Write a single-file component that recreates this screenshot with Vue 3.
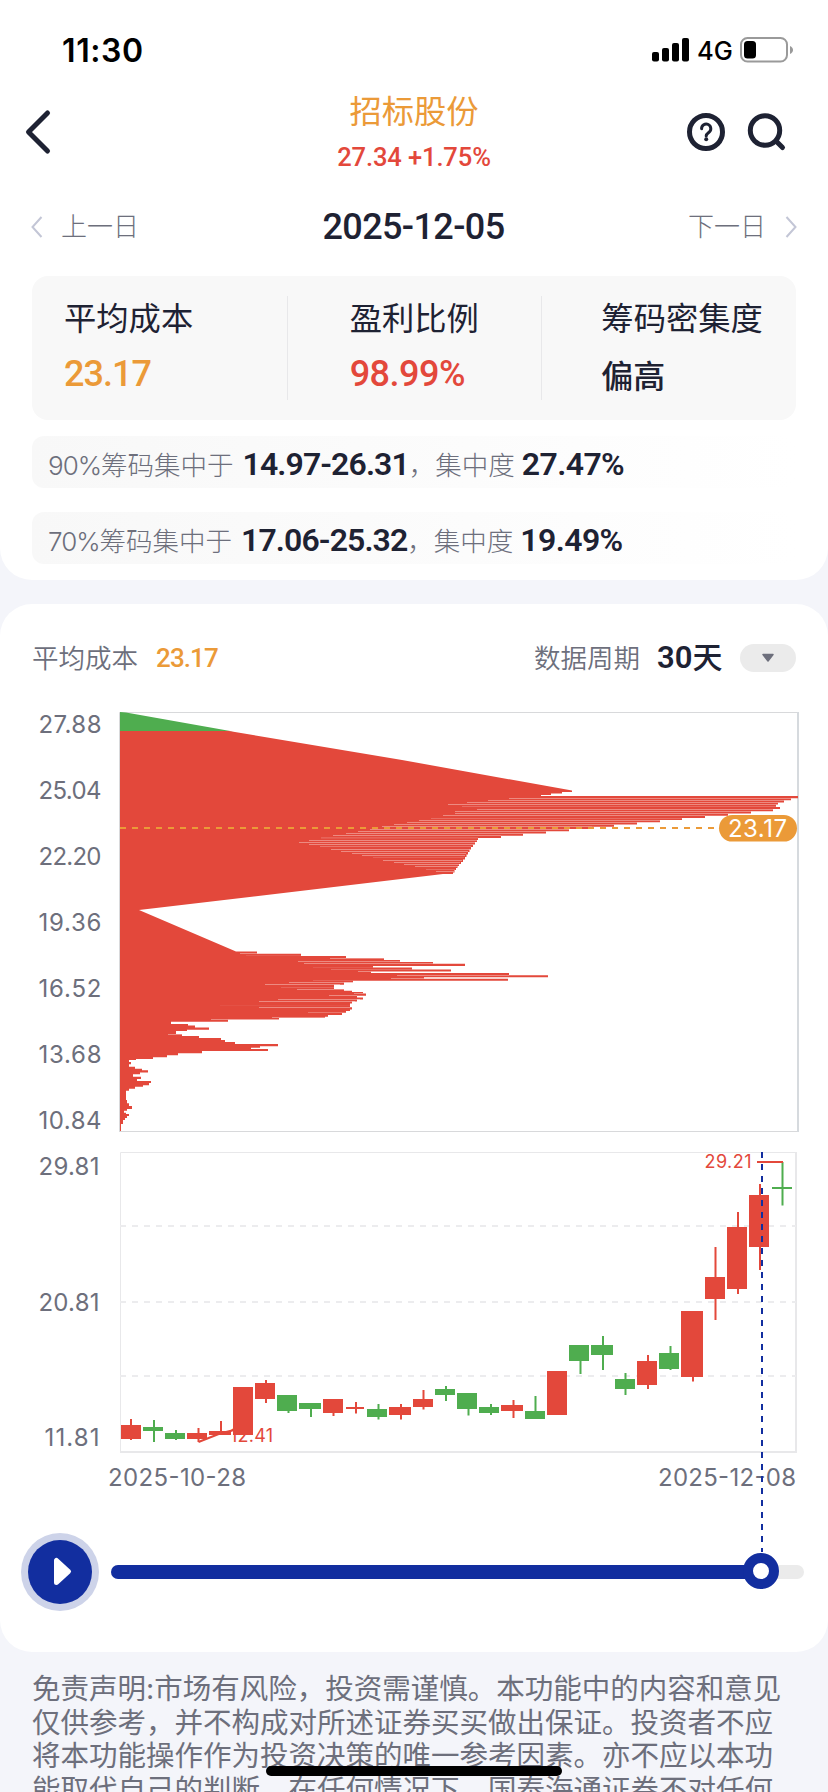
<template>
    <div class="page">
        <section class="card summary">
            <div class="status-bar">
                <span class="clock">11:30</span>
                <div class="status-right">
                    <svg class="signal" width="38" height="24" viewBox="0 0 38 24">
                        <rect x="0" y="14" width="7" height="9.5" rx="2" />
                        <rect x="10" y="10" width="7" height="13.5" rx="2" />
                        <rect x="20" y="5" width="7" height="18.5" rx="2" />
                        <rect x="30" y="0" width="7" height="23.5" rx="2" />
                    </svg>
                    <span class="network">4G</span>
                    <svg class="battery" width="54" height="26" viewBox="0 0 54 26">
                        <rect x="1" y="1" width="46" height="23.5" rx="6.5" fill="none" stroke="#9a9a9a" stroke-width="2" />
                        <rect x="4" y="4" width="12" height="17.5" rx="3.5" fill="#000" />
                        <path d="M50 9v8c4-1.500 4-6.500 0-8z" fill="#9a9a9a" />
                    </svg>
                </div>
            </div>

            <div class="nav">
                <svg class="back" width="28" height="46" viewBox="0 0 28 46">
                    <path d="M23.500 4L4.500 23L23.500 42" />
                </svg>
                <div class="stock">
                    <div class="stock-name">招标股份</div>
                    <div class="stock-price">27.34 +1.75%</div>
                </div>
                <div class="nav-icons">
                    <svg width="40" height="40" viewBox="0 0 40 40">
                        <circle cx="20" cy="20" r="16.500" />
                        <path class="thin" d="M15.600 16.800a4.600 4.600 0 1 1 7.200 3.600c-1.600 1.200-2.600 1.900-2.600 3.700" />
                        <circle class="dot" cx="20.200" cy="27.300" r="2" />
                    </svg>
                    <svg width="40" height="40" viewBox="0 0 40 40">
                        <circle cx="18" cy="18.500" r="14.700" />
                        <path d="M29.500 29.500L35.500 35.500" />
                    </svg>
                </div>
            </div>

            <div class="date-row">
                <button class="day-btn">
                    <svg width="12" height="22" viewBox="0 0 12 22"><path d="M10.500 1L1.500 11L10.500 21" /></svg>
                    <span>上一日</span>
                </button>
                <span class="date">2025-12-05</span>
                <button class="day-btn next">
                    <span>下一日</span>
                    <svg width="12" height="22" viewBox="0 0 12 22"><path d="M1.500 1L10.500 11L1.500 21" /></svg>
                </button>
            </div>

            <div class="stats">
                <div v-for="item in stats" :key="item.label" class="stat" :class="item.type">
                    <div class="stat-label">{{ item.label }}</div>
                    <div class="stat-value">{{ item.value }}</div>
                </div>
            </div>

            <div v-for="item in ranges" :key="item.percent" class="range">
                <span class="percent">{{ item.percent }}</span>
                <span>筹码集中于</span>
                <span class="range-num first">{{ item.range }}</span>
                <span>，集中度</span>
                <span class="range-num">{{ item.ratio }}</span>
            </div>
        </section>

        <section class="card chart-card">
            <div class="chart-head">
                <span class="head-label">平均成本</span>
                <span class="head-cost">23.17</span>
                <span class="head-label period-label">数据周期</span>
                <span class="period">30<b>天</b></span>
                <button class="dropdown">
                    <svg width="14" height="10" viewBox="0 0 14 10">
                        <path d="M2 1.500H12L7 8z" fill="#6d6f7c" stroke="#6d6f7c" stroke-width="1.500" stroke-linejoin="round" />
                    </svg>
                </button>
            </div>

            <!-- 筹码分布 -->
            <svg class="chart" width="828" height="440" viewBox="0 700 828 440">
                <path d="M119.500 1131V712.500H797" fill="none" stroke="#d8d9db" />
                <path d="M119 1131.500H799" stroke="#d8d9db" />
                <path d="M798 712V1132" stroke="#d6dade" stroke-width="2" />
                <path d="M120 712L126 712.500L233 731.500H120z" fill="#4fad4f" />
                <path :d="chipPath" fill="#e3483b" />
                <g shape-rendering="crispEdges" fill="#fff">
                    <rect
                        v-for="(s, i) in stripes"
                        :key="i"
                        :x="s[1]"
                        :y="s[0]"
                        :width="s[2] - s[1]"
                        height="1"
                        :opacity="s[3] || 0.36"
                    />
                </g>
                <path d="M120 828H714" stroke="#eb9a38" stroke-width="2" stroke-dasharray="6 6" />
                <rect x="719" y="815" width="78" height="26.500" rx="13.200" fill="#eb9a38" />
                <text class="badge-text" x="728" y="837" textLength="59">23.17</text>
                <text
                    v-for="(t, i) in chipLabels"
                    :key="t"
                    class="axis"
                    x="101.500"
                    :y="733 + i * 66"
                    text-anchor="end"
                    textLength="63"
                >{{ t }}</text>
            </svg>

            <!-- K线 -->
            <svg class="chart" width="828" height="412" viewBox="0 1140 828 412">
                <path d="M120.500 1452V1152.500H796" fill="none" stroke="#e8e8ea" />
                <path d="M120 1452H797M796 1152V1452" fill="none" stroke="#e8e8ea" stroke-width="2" />
                <path d="M120 1226H796M120 1302H796M120 1376H796" stroke="#ececee" stroke-width="2" stroke-dasharray="6 6" />
                <g v-for="(c, i) in candles" :key="i" :fill="c[0] ? '#e3483b' : '#4fad4f'">
                    <rect :x="c[5] - 1" :y="c[6]" width="2" :height="c[7] - c[6]" />
                    <rect :x="c[1]" :y="c[2]" :width="c[3] - c[1]" :height="c[4] - c[2]" />
                </g>
                <path d="M198.500 1442L220 1433.500L234 1430M757 1162H783" fill="none" stroke="#e3483b" stroke-width="2" />
                <text class="mark" x="230" y="1442" textLength="43">12.41</text>
                <text class="mark" x="704.500" y="1168" textLength="47">29.21</text>
                <text class="axis" x="99.500" y="1175" text-anchor="end" textLength="61">29.81</text>
                <text class="axis" x="99.500" y="1311" text-anchor="end" textLength="61">20.81</text>
                <text class="axis" x="99.500" y="1446" text-anchor="end" textLength="55">11.81</text>
                <text class="axis" x="108" y="1486" textLength="138">2025-10-28</text>
                <text class="axis" x="658" y="1486" textLength="138">2025-12-08</text>
                <path d="M762 1152V1552" stroke="#122e9f" stroke-width="2" stroke-dasharray="6 6" />
            </svg>

            <div class="player">
                <button class="play">
                    <svg width="78" height="78" viewBox="0 0 78 78">
                        <circle cx="39" cy="39" r="39" fill="#cdd3e9" />
                        <circle cx="39" cy="39" r="32" fill="#122e9f" />
                        <path d="M35.500 27.500V49.500L47.500 38.500z" fill="#fff" stroke="#fff" stroke-width="5" stroke-linejoin="round" />
                    </svg>
                </button>
                <div class="track">
                    <div class="track-fill" :style="{ width: progress + '%' }"></div>
                    <div class="knob" :style="{ left: progress + '%' }"></div>
                </div>
            </div>
        </section>

        <div class="disclaimer">
            <div v-for="line in disclaimer" :key="line">{{ line }}</div>
        </div>
        <div class="home-indicator"></div>
    </div>
</template>

<script setup>
import { computed, ref } from 'vue'

const progress = ref(93.8)

const stats = [
    { label: '平均成本', value: '23.17', type: 'cost' },
    { label: '盈利比例', value: '98.99%', type: 'profit' },
    { label: '筹码密集度', value: '偏高', type: 'density' }
]

const ranges = [
    { percent: '90%', range: '14.97-26.31', ratio: '27.47%' },
    { percent: '70%', range: '17.06-25.32', ratio: '19.49%' }
]

const chipLabels = ['27.88', '25.04', '22.20', '19.36', '16.52', '13.68', '10.84']

// 每一档: [起始y, 右端x]
const steps = [
    [796, 798], [798.2, 791], [800.2, 784], [802.4, 778], [804.6, 776], [807, 780], [809, 773],
    [811.2, 751], [813.5, 728], [815.7, 705], [818, 682], [820, 660], [822.3, 637], [824.5, 614],
    [826.8, 592], [829, 569], [831.3, 546], [833.5, 523], [835.8, 501], [838, 478], [840, 477],
    [842, 475], [844.5, 473], [847, 471], [849.5, 469.5], [852, 468], [854.5, 466.5], [857, 465],
    [859.5, 463], [862, 461], [864, 459], [866, 457.5], [868, 456], [870, 454.5], [872.5, 453], [874, 443]
]

const lowSteps = [
    [951.5, 257], [953.7, 301], [956, 346], [958, 384], [960, 400], [962, 433], [963.8, 465],
    [966, 373], [967.5, 412], [969.6, 451], [971.8, 371], [973, 509], [975.2, 548], [977.2, 424],
    [978.8, 508], [980.8, 353], [982.5, 344], [984.7, 334], [989, 344], [990.8, 352], [992, 363],
    [993.5, 366], [995.7, 357], [997.5, 363], [999.5, 357], [1001.5, 352], [1003.5, 350],
    [1007.3, 352], [1009.5, 350], [1011, 346], [1013, 342], [1015, 328], [1016.7, 325],
    [1018, 279], [1019.8, 228], [1021.8, 171], [1024, 188], [1025.5, 195], [1027.5, 209],
    [1029.7, 187], [1031, 176], [1034, 182], [1036, 199], [1038, 221], [1040, 225], [1042, 235],
    [1044, 278], [1046.3, 260], [1047.7, 251], [1049, 268], [1051, 202], [1053.3, 178],
    [1055.3, 167], [1057.3, 153], [1059, 136], [1060, 129], [1062, 131], [1064.3, 129],
    [1066.7, 135], [1068.7, 142], [1070.3, 148], [1072.5, 140], [1074.3, 133], [1076.7, 141],
    [1079, 137], [1081, 151], [1083, 149], [1085.3, 143], [1086.7, 135], [1088.7, 129],
    [1090.7, 126], [1100, 127], [1103.3, 129], [1106, 132], [1109, 127], [1110.7, 124],
    [1112.7, 126], [1114, 129], [1116, 127], [1118, 125], [1120, 123], [1124, 121], [1131, 120]
]

function toSteps(list) {
    return list.map(([y, x]) => `V${y}H${x}`).join('')
}

const chipPath = computed(() =>
    `M120 731H229L402 760L572 790.500V792H562V793.500H551V795H541${toSteps(steps)}` +
    `L139 910L236 951.500${toSteps(lowSteps)}V731z`
)

// 档位之间的浅色缝隙: [y, x1, x2, 透明度]
const stripes = [
    [798, 509, 791], [800, 488, 784], [802, 467, 778], [804, 448, 776], [806, 462, 776, 0.2],
    [809, 477, 773], [811, 455, 751], [813, 455, 728], [815, 443, 705], [818, 431, 682, 0.2],
    [820, 419, 660], [822, 407, 637], [824, 394, 614], [826, 382, 592], [829, 370, 569],
    [831, 358, 546], [833, 346, 523], [835, 333, 501], [837, 321, 478, 0.15], [838, 321, 478, 0.1],
    [840, 309, 477], [842, 299, 475], [844, 309, 473], [846, 320, 471, 0.25], [849, 331, 470],
    [851, 341, 468], [853, 352, 466], [855, 362, 465], [857, 373, 464, 0.15], [860, 383, 462],
    [862, 394, 460], [864, 404, 459], [866, 415, 457], [869, 426, 455, 0.2], [871, 436, 454],
    [953, 240, 257], [955, 246, 301, 0.1], [958, 330, 384], [961, 298, 400], [963, 304, 433],
    [967, 313, 373, 0.1], [969, 331, 412, 0.2], [971, 358, 451], [975, 397, 509], [978, 391, 424],
    [980, 313, 353, 0.15], [982, 289, 353], [984, 265, 340], [987, 281, 334, 0.15],
    [989, 297, 344], [993, 354, 363], [995, 329, 357], [999, 278, 360], [1001, 259, 355],
    [1005, 220, 350, 0.05], [1007, 259, 350], [1012, 308, 346, 0.25], [1017, 272, 325],
    [1019, 211, 279], [1034, 168, 182]
]

// [涨跌, 左, 上, 右, 下, 影线x, 最高y, 最低y]
const candles = [
    [1, 121, 1425, 141, 1439, 131, 1419, 1440],
    [0, 143, 1427, 163, 1431, 154, 1420, 1442],
    [0, 165, 1433, 185, 1439, 176, 1430, 1440],
    [1, 187, 1433, 207, 1439, 198.5, 1428, 1442],
    [1, 209, 1431, 231, 1435, 221, 1421, 1435],
    [1, 233, 1387, 253, 1435, 243, 1387, 1435],
    [1, 255, 1383, 275, 1399, 266, 1380, 1403],
    [0, 277, 1395, 297, 1411, 288.5, 1395, 1413],
    [0, 299, 1403, 321, 1409, 311, 1403, 1417],
    [1, 323, 1399, 343, 1413, 333.5, 1399, 1416],
    [1, 346, 1407, 364, 1409, 356, 1402, 1413.5],
    [0, 367, 1409, 387, 1417, 378.5, 1404, 1419.5],
    [1, 389, 1407, 411, 1415, 401, 1404, 1419.5],
    [1, 413, 1399, 433, 1407, 423.5, 1390, 1409.5],
    [0, 435, 1389, 455, 1395, 446, 1386, 1401],
    [0, 457, 1393, 477, 1409, 468.5, 1393, 1415.5],
    [0, 479, 1407, 499, 1413, 491, 1404, 1415],
    [1, 501, 1405, 523, 1411, 513.5, 1400, 1418],
    [0, 525, 1411, 545, 1419, 535.5, 1396, 1419],
    [1, 547, 1371, 567, 1415, 557, 1371, 1415],
    [0, 569, 1345, 589, 1361, 580.5, 1345, 1374],
    [0, 591, 1345, 613, 1355, 603, 1336, 1370],
    [0, 615, 1379, 635, 1389, 625.5, 1373, 1395],
    [1, 637, 1361, 657, 1385, 648, 1355, 1389],
    [0, 659, 1353, 679, 1369, 670.5, 1346, 1370],
    [1, 681, 1311, 703, 1377, 693, 1311, 1381.5],
    [1, 705, 1277, 725, 1299, 715.5, 1247, 1320],
    [1, 727, 1227, 747, 1289, 738, 1212, 1294],
    [1, 749, 1195, 769, 1247, 760, 1184, 1270],
    [0, 772, 1187, 792, 1189, 782.5, 1162, 1205.5]
]

const disclaimer = [
    '免责声明:市场有风险，投资需谨慎。本功能中的内容和意见',
    '仅供参考，并不构成对所述证券买买做出保证。投资者不应',
    '将本功能操作作为投资决策的唯一参考因素。亦不应以本功',
    '能取代自己的判断，在任何情况下，国泰海通证券不对任何'
]
</script>

<style>
body {
    margin: 0;
    background: #f4f5fa;
}
</style>

<style scoped>
.page {
    position: relative;
    width: 828px;
    height: 1792px;
    overflow: hidden;
    background: #f4f5fa;
    color: #1e2233;
    font-family: Inter, "Noto Sans CJK SC", sans-serif;
}

button {
    padding: 0;
    border: none;
    background: none;
    font-family: inherit;
}

svg {
    display: block;
    flex: none;
}

.card {
    background: #fff;
    border-radius: 32px;
}

.summary {
    height: 580px;
    border-radius: 0 0 32px 32px;
}

.status-bar {
    display: flex;
    justify-content: space-between;
    align-items: center;
    box-sizing: border-box;
    height: 92px;
    padding: 8px 34px 0 62px;
    color: #000;
}

.clock {
    font-size: 32px;
    font-weight: 600;
    letter-spacing: 0.6px;
}

.status-right {
    display: flex;
    align-items: center;
}

.network {
    width: 43px;
    padding-left: 7px;
    box-sizing: border-box;
    font-size: 25.5px;
    font-weight: 450;
    white-space: nowrap;
}

.battery {
    margin-left: 7px;
}

.nav {
    display: grid;
    grid-template-columns: 200px 1fr 200px;
    align-items: center;
    height: 80px;
}

.back {
    margin-left: 24px;
}

.back path,
.nav-icons svg {
    fill: none;
    stroke: #1e2233;
    stroke-width: 5;
    stroke-linecap: round;
    stroke-linejoin: round;
}

.stock {
    text-align: center;
}

.stock-name {
    height: 50px;
    color: #eb9a38;
    font-size: 32.3px;
    line-height: 40px;
}

.stock-price {
    height: 30px;
    color: #e3483b;
    font-family: Roboto, sans-serif;
    font-size: 25.5px;
    font-weight: 500;
    line-height: 30px;
    letter-spacing: -0.1px;
}

.nav-icons {
    display: flex;
    gap: 21px;
    padding-left: 58px;
}

.nav-icons svg .thin {
    stroke-width: 3;
}

.nav-icons svg .dot {
    fill: #1e2233;
    stroke: none;
}

.date-row {
    display: flex;
    justify-content: space-between;
    align-items: center;
    height: 72px;
    margin-top: 19px;
    padding: 0 31px;
}

.day-btn {
    display: flex;
    align-items: center;
    gap: 18px;
    color: #6d6f7c;
    font-size: 26px;
    font-weight: 300;
    line-height: 34px;
}

.day-btn.next {
    gap: 19px;
}

.day-btn svg {
    fill: none;
    stroke: #c3c6d6;
    stroke-width: 2;
}

.date {
    font-family: Roboto, sans-serif;
    font-size: 36px;
    font-weight: 500;
    letter-spacing: -0.6px;
}

.stats {
    display: grid;
    grid-template-columns: repeat(3, 1fr);
    height: 144px;
    margin: 13px 32px 0;
    background: #f8f8f8;
    border-radius: 16px;
}

.stat {
    height: 104px;
    margin-top: 20px;
    padding-left: 32px;
    box-sizing: border-box;
}

.stat + .stat {
    padding-left: 62px;
    border-left: 1px solid #e8e8ea;
}

.stat.density {
    padding-left: 59px;
}

.stat-label {
    height: 44px;
    font-size: 32.3px;
    line-height: 46px;
    white-space: nowrap;
}

.stat-value {
    height: 44px;
    margin-top: 11px;
    font-family: Roboto, "Noto Sans CJK SC", sans-serif;
    font-size: 36px;
    font-weight: 500;
    line-height: 46px;
}

.cost .stat-value {
    color: #eb9a38;
    letter-spacing: -1px;
}

.profit .stat-value {
    color: #e3483b;
    letter-spacing: -0.5px;
}

.density .stat-value {
    font-size: 32px;
    line-height: 52px;
}

.range {
    display: flex;
    align-items: baseline;
    height: 52px;
    margin: 16px 32px 0;
    padding-left: 16px;
    background: linear-gradient(90deg, #f8f8f8, #fff);
    border-radius: 12px;
    color: #6d6f7c;
    font-size: 26.5px;
    font-weight: 300;
    line-height: 56px;
    white-space: nowrap;
}

.range + .range {
    margin-top: 24px;
}

.range .percent {
    font-size: 26px;
    letter-spacing: -1px;
}

.range-num {
    margin-left: 7px;
    color: #1e2233;
    font-family: Roboto, sans-serif;
    font-size: 32px;
    font-weight: 600;
    letter-spacing: -0.6px;
}

.range-num.first {
    margin-left: 9px;
    letter-spacing: -0.9px;
}

.chart-card {
    height: 1048px;
    margin-top: 24px;
}

.chart-head {
    display: flex;
    align-items: center;
    box-sizing: border-box;
    height: 96px;
    padding: 12px 32px 0;
}

.head-label {
    color: #6d6f7c;
    font-size: 26.5px;
    font-weight: 350;
    line-height: 36px;
}

.head-cost {
    margin-left: 18px;
    color: #eb9a38;
    font-family: Roboto, sans-serif;
    font-size: 26px;
    font-weight: 500;
    letter-spacing: -0.9px;
}

.period-label {
    margin-left: auto;
}

.period {
    display: flex;
    align-items: center;
    width: 83px;
    margin-left: 17px;
    font-family: Roboto, "Noto Sans CJK SC", sans-serif;
    font-size: 31px;
    font-weight: 600;
    line-height: 40px;
}

.period b {
    font-size: 30px;
    font-weight: 500;
}

.dropdown {
    display: flex;
    align-items: center;
    justify-content: center;
    width: 56px;
    height: 28px;
    background: #ebebeb;
    border-radius: 14px;
}

.axis {
    fill: #6d6f7c;
    font-size: 24px;
}

.badge-text {
    fill: #fff;
    font-size: 24px;
}

.mark {
    fill: #e3483b;
    font-size: 18px;
}

.player {
    display: flex;
    align-items: center;
    height: 40px;
    padding-left: 21px;
}

.track {
    position: relative;
    width: 693px;
    height: 14px;
    margin-left: 12px;
    background: #ebebeb;
    border-radius: 7px;
}

.track-fill {
    height: 14px;
    background: #122e9f;
    border-radius: 7px;
}

.knob {
    position: absolute;
    top: -12px;
    width: 16px;
    height: 16px;
    margin-left: -18px;
    border: 10px solid #122e9f;
    border-radius: 50%;
    background: #fff;
}

.disclaimer {
    padding: 20px 32px 0;
    color: #6d6f7c;
    font-size: 28.5px;
    line-height: 33.7px;
    white-space: nowrap;
}

.home-indicator {
    position: absolute;
    left: 266px;
    bottom: 16px;
    width: 296px;
    height: 10px;
    background: #000;
    border-radius: 5px;
}
</style>
